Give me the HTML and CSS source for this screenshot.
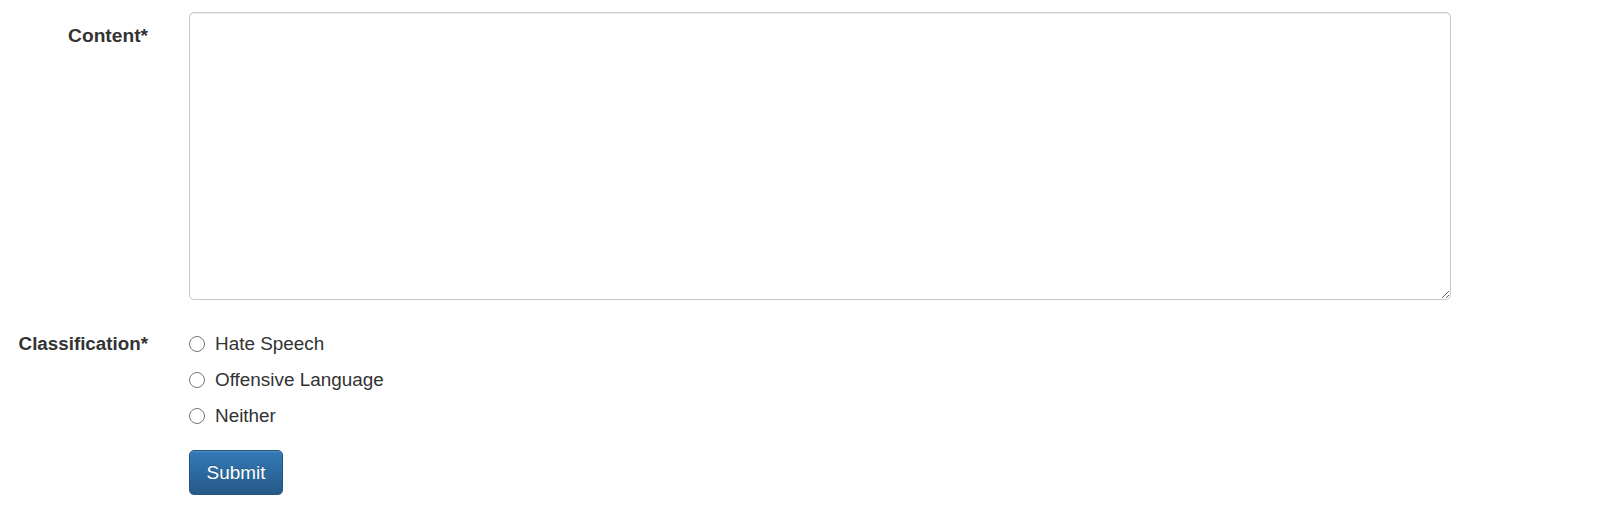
FILE: index.html
```html
<!DOCTYPE html>
<html lang="en">
<head>
<meta charset="utf-8">
<title>Classify content</title>
<link rel="stylesheet" href="styles.css">
</head>
<body>
<form class="form">
  <div class="group">
    <label class="label" for="content">Content*</label>
    <div class="control">
      <textarea id="content" class="textarea"></textarea>
    </div>
  </div>
  <div class="group group-radios">
    <span class="label label-radios">Classification*</span>
    <div class="control">
      <label class="radio"><input type="radio" name="cls" class="radio-input"><span>Hate Speech</span></label>
      <label class="radio"><input type="radio" name="cls" class="radio-input"><span>Offensive Language</span></label>
      <label class="radio"><input type="radio" name="cls" class="radio-input"><span>Neither</span></label>
    </div>
  </div>
  <div class="group group-actions">
    <span class="spacer"></span>
    <div class="control">
      <button type="submit" class="btn">Submit</button>
    </div>
  </div>
</form>
</body>
</html>
```

FILE: styles.css
```css
html, body {
  margin: 0;
  padding: 0;
  background: #fff;
}

body {
  font-family: "Liberation Sans", Arial, Helvetica, sans-serif;
  font-size: 18.9px;
  line-height: 26px;
  color: #333;
}

.form {
  display: flex;
  flex-direction: column;
  padding-top: 12px;
}

.group {
  display: grid;
  grid-template-columns: 148px 1263px;
  column-gap: 41px;
}

.group-radios {
  margin-top: 26px;
}

.group-actions {
  margin-top: 16px;
}

.label {
  display: block;
  text-align: right;
  font-weight: bold;
  font-size: 19.2px;
  padding-top: 11px;
  white-space: nowrap;
}

.label-radios {
  font-size: 18.8px;
  padding-top: 5px;
}

.control {
  display: flex;
  flex-direction: column;
  align-items: flex-start;
}

.textarea {
  box-sizing: border-box;
  width: 1262px;
  height: 288px;
  margin: 0;
  border: 1px solid #c8c8c8;
  border-radius: 5px;
  box-shadow: inset 0 1px 1px rgba(0, 0, 0, 0.075);
  font-family: inherit;
  font-size: inherit;
  padding: 8px 15px;
  resize: vertical;
  outline: none;
}

.radio {
  display: flex;
  align-items: center;
  height: 36px;
  gap: 10px;
  cursor: pointer;
}

.radio-input {
  appearance: none;
  -webkit-appearance: none;
  box-sizing: border-box;
  width: 16px;
  height: 16px;
  margin: 0;
  border: 1px solid #777;
  border-radius: 50%;
  background: #fff;
  flex: none;
}

.btn {
  box-sizing: border-box;
  width: 94px;
  height: 45px;
  padding: 0;
  margin: 0;
  font-family: inherit;
  font-size: 18.9px;
  line-height: 26px;
  color: #fff;
  text-align: center;
  text-shadow: 0 -1px 0 rgba(0, 0, 0, 0.2);
  background-image: linear-gradient(to bottom, #337ab7 0%, #265a88 100%);
  border: 1px solid #245580;
  border-radius: 5px;
  box-shadow: inset 0 1px 0 rgba(255, 255, 255, 0.15), 0 1px 1px rgba(0, 0, 0, 0.075);
  cursor: pointer;
}
```
